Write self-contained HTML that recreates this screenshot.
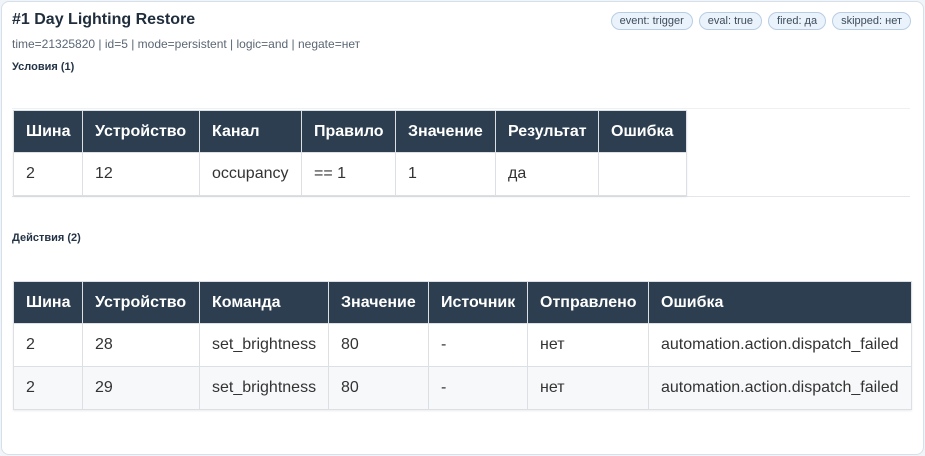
<!DOCTYPE html>
<html><head><meta charset="utf-8"><style>
*{box-sizing:border-box;margin:0;padding:0}
body{width:925px;height:456px;background:#f1f4f8;font-family:"Liberation Sans",Arial,sans-serif;position:relative;overflow:hidden}
.card{position:absolute;left:1px;top:1px;width:923px;height:454px;background:#fff;border:1px solid #d6e0ea;border-radius:8px}
.title{position:absolute;left:12px;top:11px;font-size:16px;font-weight:bold;color:#1f2d3d}
.meta{position:absolute;left:12px;top:37px;font-size:12px;color:#5b6775}
.sec{position:absolute;left:12px;font-size:11px;font-weight:bold;color:#243447}
.tags{position:absolute;right:14px;top:12px;display:flex;gap:6px}
.tag{font-size:11px;color:#3d4c5c;background:#eaf2fb;border:1px solid #b8cde4;border-radius:10px;height:18px;line-height:16px;padding:0 8px}
.wrap{position:absolute;left:12px;width:898px;border-top:1px solid #eef1f4;border-bottom:1px solid #e3e7eb}
table{border-collapse:collapse;table-layout:fixed;font-size:16px;box-shadow:0 1px 2px rgba(0,0,0,.08)}
th{background:#2c3e50;color:#fff;text-align:left;font-weight:bold;height:42px;padding:0 12px;border:1px solid #dcdfe3;white-space:nowrap}
td{height:43px;padding:0 12px;border:1px solid #dcdfe3;color:#333;white-space:nowrap}
tr.alt td{background:#f7f8fa}
</style></head><body>
<div class="card"></div>
<div class="title">#1 Day Lighting Restore</div>
<div class="meta">time=21325820 | id=5 | mode=persistent | logic=and | negate=нет</div>
<div class="tags"><span class="tag">event: trigger</span><span class="tag">eval: true</span><span class="tag">fired: да</span><span class="tag">skipped: нет</span></div>
<div class="sec" style="top:61px">Условия (1)</div>
<div class="wrap" style="top:108px;height:89px">
<table style="position:absolute;left:1px;top:1px;width:674px">
<colgroup><col style="width:69px"><col style="width:117px"><col style="width:102px"><col style="width:94px"><col style="width:100px"><col style="width:103px"><col style="width:88px"></colgroup>
<tr><th>Шина</th><th>Устройство</th><th>Канал</th><th>Правило</th><th>Значение</th><th>Результат</th><th>Ошибка</th></tr>
<tr><td>2</td><td>12</td><td>occupancy</td><td>== 1</td><td>1</td><td>да</td><td></td></tr>
</table></div>
<div class="sec" style="top:232px">Действия (2)</div>
<div style="position:absolute;left:13px;top:281px">
<table style="width:898px">
<colgroup><col style="width:69px"><col style="width:117px"><col style="width:129px"><col style="width:100px"><col style="width:99px"><col style="width:121px"><col style="width:263px"></colgroup>
<tr><th>Шина</th><th>Устройство</th><th>Команда</th><th>Значение</th><th>Источник</th><th>Отправлено</th><th>Ошибка</th></tr>
<tr><td>2</td><td>28</td><td>set_brightness</td><td>80</td><td>-</td><td>нет</td><td>automation.action.dispatch_failed</td></tr>
<tr class="alt"><td>2</td><td>29</td><td>set_brightness</td><td>80</td><td>-</td><td>нет</td><td>automation.action.dispatch_failed</td></tr>
</table></div>
</body></html>
